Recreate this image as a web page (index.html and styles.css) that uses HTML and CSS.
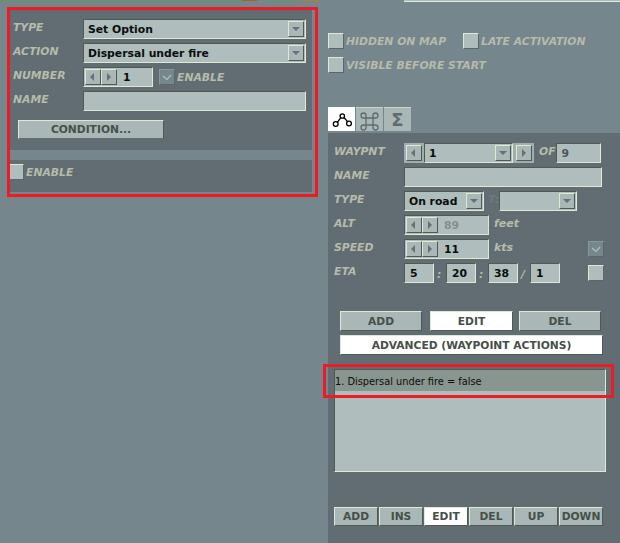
FILE: index.html
```
<!DOCTYPE html>
<html lang="en">
<head>
<meta charset="utf-8">
<title>Waypoint editor</title>
<link rel="stylesheet" href="styles.css">
</head>
<body>
<div class="page">
  <section class="left">
    <div class="top-strip"><span class="strip-a"></span><span class="strip-b"></span><span class="strip-c"></span><span class="strip-d"></span><span class="strip-b2"></span></div>
    <div class="panel action-panel">
      <div class="row"><span class="label">TYPE</span><div class="field select w-223"><span class="value">Set Option</span><i class="btn-arrow down"></i></div></div>
      <div class="row"><span class="label">ACTION</span><div class="field select w-223"><span class="value">Dispersal under fire</span><i class="btn-arrow down"></i></div></div>
      <div class="row"><span class="label">NUMBER</span><div class="field spin w-70"><i class="btn-arrow left"></i><i class="btn-arrow right"></i><span class="value">1</span></div><i class="check checked enable-check"><svg viewBox="0 0 14 14"><path d="M3 6l4 3.500 4-4.500"/></svg></i><span class="label inline level">ENABLE</span></div>
      <div class="row"><span class="label">NAME</span><div class="field w-223"></div></div>
      <button class="btn condition">CONDITION...</button>
    </div>
    <div class="panel enable-panel"><i class="check flush"></i><span class="label inline level">ENABLE</span></div>
  </section>
  <section class="right">
    <div class="top-field"></div>
    <div class="options">
      <div class="opt-row"><label class="opt opt-wide"><i class="check"></i><span class="label inline">HIDDEN ON MAP</span></label><label class="opt"><i class="check"></i><span class="label inline">LATE ACTIVATION</span></label></div>
      <div class="opt-row"><label class="opt"><i class="check"></i><span class="label inline">VISIBLE BEFORE START</span></label></div>
    </div>
    <div class="tabs">
      <div class="tab active"><svg viewBox="0 0 27 24"><circle cx="14.300" cy="9" r="2.200"/><circle cx="7.700" cy="17" r="2.400"/><circle cx="21" cy="16.500" r="2.400"/><path d="M9.300 15.300l3.500-4.600M16 10.500l3.500 4.200"/></svg></div>
      <div class="tab"><svg class="cmd" viewBox="0 0 27 24"><path d="M10 10h7v7h-7zM10 10H7.500a2.500 2.500 0 1 1 2.500-2.500zM17 10V7.500a2.500 2.500 0 1 1 2.500 2.500zM17 17h2.500a2.500 2.500 0 1 1-2.500 2.500zM10 17v2.500a2.500 2.500 0 1 1-2.500-2.500z"/></svg></div>
      <div class="tab"><span class="sigma">Σ</span></div>
    </div>
    <div class="panel route-panel">
      <div class="row">
        <span class="label">WAYPNT</span>
        <div class="spin-box"><i class="btn-arrow left"></i></div>
        <div class="field select w-89"><span class="value">1</span><i class="btn-arrow down"></i></div>
        <div class="spin-box wide"><i class="btn-arrow right"></i></div>
        <span class="label inline of">OF</span>
        <div class="field w-45"><span class="value muted">9</span></div>
      </div>
      <div class="row"><span class="label">NAME</span><div class="field w-198"></div></div>
      <div class="row">
        <span class="label">TYPE</span>
        <div class="field select w-80"><span class="value">On road</span><i class="btn-arrow down"></i></div>
        <span class="label inline faint">T:</span>
        <div class="field select w-78"><i class="btn-arrow down"></i></div>
      </div>
      <div class="row"><span class="label">ALT</span><div class="field spin w-85"><i class="btn-arrow left"></i><i class="btn-arrow right"></i><span class="value dim">89</span></div><span class="label inline unit">feet</span></div>
      <div class="row"><span class="label">SPEED</span><div class="field spin w-85"><i class="btn-arrow left"></i><i class="btn-arrow right"></i><span class="value">11</span></div><span class="label inline unit">kts</span><i class="check checked end-check"><svg viewBox="0 0 14 14"><path d="M3 6l4 3.500 4-4.500"/></svg></i></div>
      <div class="row eta">
        <span class="label">ETA</span>
        <div class="field w-30"><span class="value">5</span></div><span class="label sep">:</span>
        <div class="field w-30"><span class="value">20</span></div><span class="label sep">:</span>
        <div class="field w-30"><span class="value">38</span></div><span class="label sep">/</span>
        <div class="field w-30"><span class="value">1</span></div>
        <i class="check eta-check"></i>
      </div>
      <div class="action-row">
        <button class="btn w-82">ADD</button>
        <button class="btn lit w-83 gap-8">EDIT</button>
        <button class="btn w-82 gap-6">DEL</button>
      </div>
      <button class="btn lit advanced">ADVANCED (WAYPOINT ACTIONS)</button>
      <div class="field list"><div class="list-item">1. Dispersal under fire = false</div></div>
      <div class="bottom-row">
        <button class="btn">ADD</button>
        <button class="btn">INS</button>
        <button class="btn lit">EDIT</button>
        <button class="btn">DEL</button>
        <button class="btn">UP</button>
        <button class="btn">DOWN</button>
      </div>
    </div>
  </section>
  <div class="marker marker-left"></div>
  <div class="marker marker-right"></div>
</div>
</body>
</html>
```
FILE: styles.css
```
* { box-sizing: border-box; }
html, body { margin: 0; padding: 0; }
body { width: 620px; height: 543px; overflow: hidden; background: #76868d; font-family: "DejaVu Sans", sans-serif; }
.page { position: relative; display: flex; width: 620px; height: 543px; overflow: hidden; background: #76868d; }
.left { width: 328px; flex: none; }
.right { flex: 1; min-width: 0; }

.top-strip { display: flex; height: 1px; }
.strip-a { width: 242px; background: #62975f; }
.strip-b { width: 15px; background: #a8602c; }
.strip-c { width: 8px; background: #76868d; }
.strip-d { width: 37px; background: #62975f; }
.strip-b2 { width: 18px; background: #b0802c; }

.panel { background: #616d72; }
.action-panel { margin: 8px 0 0 10px; width: 302px; height: 141px; padding-top: 10px; }
.enable-panel { display: flex; align-items: center; margin: 10px 0 0 10px; width: 302px; height: 32px; padding-bottom: 8px; }

.row { display: flex; align-items: center; height: 20px; margin-bottom: 4px; }
.label { flex: none; width: 73px; padding-left: 3px; margin-top: -3px; font-size: 10.800px; font-weight: 700; font-style: italic; color: #b7bbaa; white-space: nowrap; }
.label.inline { width: auto; padding-left: 0; }
.label.level { margin-top: 1px; }

.field { position: relative; display: flex; align-items: center; flex: none; height: 20px; background: #afbdbc; border-style: solid; border-width: 1px; border-color: #4f5b52 #dfe8d4 #dfe8d4 #4f5b52; }
.value { padding-top: 1px; font-size: 10.800px; font-weight: 700; color: #0b0d0d; white-space: nowrap; }
.select .value { padding-left: 4px; }
.muted { padding-left: 5px; color: #4e5556; }
.dim { color: #858d8e; }
.w-223 { width: 223px; }
.w-198 { width: 198px; }
.w-89 { width: 89px; }
.w-85 { width: 85px; }
.w-80 { width: 80px; }
.w-78 { width: 78px; }
.w-70 { width: 70px; }
.w-45 { width: 45px; }
.w-30 { width: 30px; }
.w-30 .value { padding-left: 5px; }

.btn-arrow { position: relative; display: block; flex: none; width: 16px; height: 16px; background: #a9b7b6; border-style: solid; border-width: 1px; border-color: #dfe8d4 #4f5b52 #4f5b52 #dfe8d4; }
.btn-arrow::before { content: ""; position: absolute; width: 0; height: 0; border-style: solid; }
.select > .btn-arrow { margin-left: auto; margin-right: 1px; }
.down::before { left: 3px; top: 5px; border-width: 4px 4px 0; border-color: #657174 transparent transparent; }
.btn-arrow.left::before { left: 4px; top: 3px; border-width: 4px 4px 4px 0; border-color: transparent #657174 transparent transparent; }
.btn-arrow.right::before { left: 5px; top: 3px; border-width: 4px 0 4px 4px; border-color: transparent transparent transparent #657174; }

.spin { padding-left: 1px; }
.spin .value { padding-left: 6px; }
.spin-box { display: flex; align-items: center; justify-content: center; flex: none; width: 20px; height: 20px; background: #a0aeae; }
.spin-box.wide { width: 21px; }

.check { display: block; flex: none; width: 16px; height: 16px; background: #afbdbc; border-style: solid; border-width: 1px; border-color: #dfe8d4 #5a6669 #5a6669 #dfe8d4; }
.check svg { display: block; width: 14px; height: 14px; fill: none; stroke: #b4c0bf; stroke-width: 1.200; }
.check.checked { background: #76868d; border-color: #8a989c #5a6669 #5a6669 #8a989c; }
.enable-check { margin-left: 6px; margin-right: 2px; }
.flush { border-left: none; width: 14px; margin-right: 2px; }

.btn { display: block; padding: 0; height: 20px; background: #a9b7b6; border-style: solid; border-width: 1px; border-color: #dfe8d4 #4f5b52 #4f5b52 #dfe8d4; font-family: "DejaVu Sans", sans-serif; font-size: 10.700px; font-weight: 700; color: #465048; white-space: nowrap; }
.btn.lit { background: #fff; }
.condition { margin: 9px 0 0 8px; width: 146px; height: 19px; border-bottom-color: #616d72; }

.top-field { margin-left: 76px; height: 2px; background: linear-gradient(#afbdbc 1px, #dfe8d4 1px); }
.options { margin-top: 31px; }
.opt-row { display: flex; height: 15px; margin-bottom: 9px; }
.opt { display: flex; align-items: center; }
.opt .check { margin-right: 2px; }
.opt .label { margin-top: 2px; }
.opt-wide { width: 135px; }

.tabs { display: flex; gap: 1px; margin-top: 35px; height: 24px; }
.tab { display: flex; align-items: center; justify-content: center; width: 27px; height: 24px; background: #a9b7b6; border-top: 1px solid #c9d4c8; }
.tab.active { background: #fff; border-top: none; }
.tab svg { display: block; flex: none; width: 27px; height: 24px; fill: none; stroke: #000; stroke-width: 1.300; }
.tab svg.cmd { stroke: #5f6b6e; }
.sigma { font-size: 18px; font-weight: 700; color: #5f6b6e; }

.route-panel { margin-top: 2px; height: 410px; padding-top: 10px; }
.route-panel .label { width: 76px; padding-left: 6px; }
.route-panel .label.inline { width: auto; padding-left: 0; }
.of { margin-left: 5px; }
.route-panel .label.faint { width: 11px; margin: -3px 0 0 4px; color: #6e7a7e; }
.unit { margin-left: 5px; font-size: 11px; }
.end-check { margin-left: auto; margin-right: 16px; }
.route-panel .label.sep { width: 12px; padding-left: 3px; margin-top: 3px; }
.eta-check { margin-left: 28px; background: #afbdbc; }

.action-row { display: flex; margin: 28px 0 0 12px; }
.w-82 { width: 82px; }
.w-83 { width: 83px; }
.gap-8 { margin-left: 8px; }
.gap-6 { margin-left: 6px; }
.advanced { margin: 4px 0 0 12px; width: 263px; }
.list { display: block; margin: 14px 0 0 6px; width: 272px; height: 103px; }
.list-item { height: 21px; line-height: 23px; background: #89958f; font-size: 9.800px; color: #0b0d0d; white-space: nowrap; }
.bottom-row { display: flex; gap: 1px; margin: 35px 0 0 6px; }
.bottom-row .btn { width: 44px; height: 19px; }

.marker { position: absolute; border: 3px solid #ed1c24; }
.marker-left { left: 7px; top: 7px; width: 311px; height: 190px; }
.marker-right { left: 323px; top: 364px; width: 291px; height: 34px; }
```
